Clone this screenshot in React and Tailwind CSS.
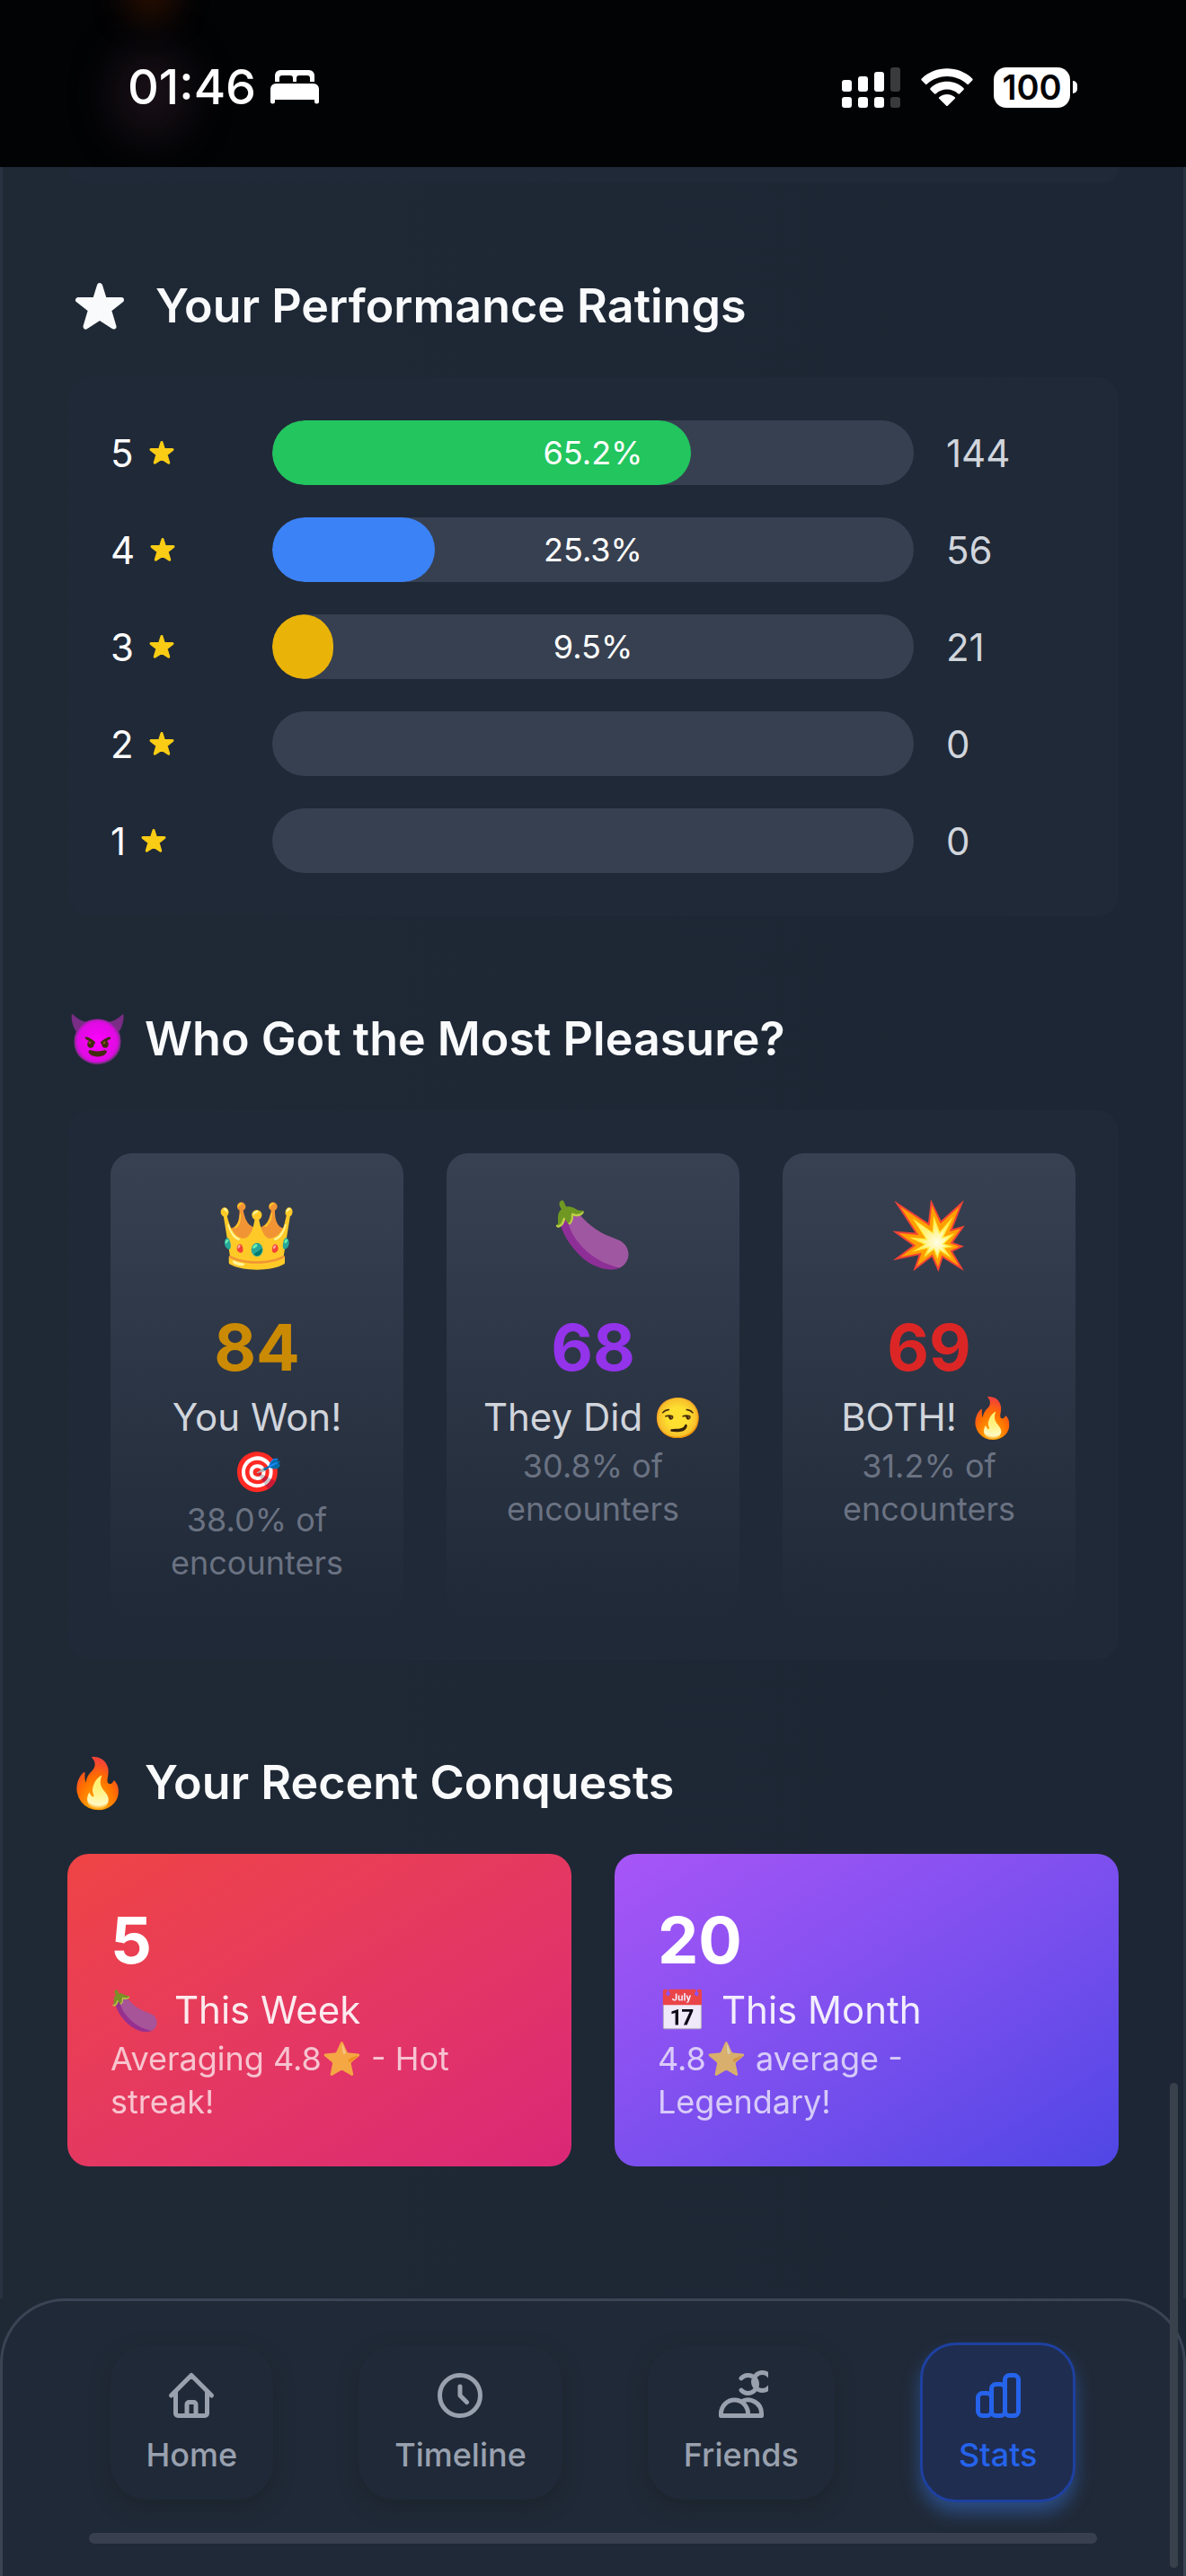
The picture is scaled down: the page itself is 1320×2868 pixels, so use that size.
const ratings = [
  { stars: 5, count: 144, percent: 65.2, color: "bg-[#22c55e]" },
  { stars: 4, count: 56, percent: 25.3, color: "bg-[#3b82f6]" },
  { stars: 3, count: 21, percent: 9.5, color: "bg-[#eab308]" },
  { stars: 2, count: 0, percent: 0, color: "bg-gray-500" },
  { stars: 1, count: 0, percent: 0, color: "bg-gray-500" },
];

const outcomes = [
  { icon: "👑", value: 84, label: "You Won!", emoji: "🎯", stacked: true, share: "38.0%", color: "text-[#ca8a04]" },
  { icon: "🍆", value: 68, label: "They Did", emoji: "😏", share: "30.8%", color: "text-[#9333ea]" },
  { icon: "💥", value: 69, label: "BOTH!", emoji: "🔥", share: "31.2%", color: "text-[#dc2626]" },
];

const tabs = [
  {
    name: "Home",
    path: "M3 12l2-2m0 0l7-7 7 7M5 10v10a1 1 0 001 1h3m10-11l2 2m-2-2v10a1 1 0 01-1 1h-3m-6 0a1 1 0 001-1v-4a1 1 0 011-1h2a1 1 0 011 1v4a1 1 0 001 1m-6 0h6",
  },
  { name: "Timeline", path: "M12 8v4l3 3m6-3a9 9 0 11-18 0 9 9 0 0118 0z" },
  {
    name: "Friends",
    path: "M12 4.354a4 4 0 110 5.292M15 21H3v-1a6 6 0 0112 0v1zm0 0h6v-1a6 6 0 00-9-5.197M25.4 5.8a4 4 0 11-8 0 4 4 0 018 0z",
  },
  {
    name: "Stats",
    active: true,
    path: "M9 19v-6a2 2 0 00-2-2H5a2 2 0 00-2 2v6a2 2 0 002 2h2a2 2 0 002-2zm0 0V9a2 2 0 012-2h2a2 2 0 012 2v10m-6 0a2 2 0 002 2h2a2 2 0 002-2m0 0V5a2 2 0 012-2h2a2 2 0 012 2v14a2 2 0 01-2 2h-2a2 2 0 01-2-2z",
  },
];

function Star({ className }) {
  return (
    <svg
      className={className}
      viewBox="0 0 60 60"
      fill="currentColor"
      stroke="currentColor"
      strokeWidth="6"
      strokeLinejoin="round"
      aria-hidden="true"
    >
      <path d="M30 7L35 23H54L40 34L45.500 52.500L30 42.500L14.500 52.500L20 34L6 23H25Z" />
    </svg>
  );
}

function StatusBar() {
  return (
    <header className="relative flex h-[186px] items-center justify-between overflow-hidden bg-[#020305] pt-2 pr-[121px] pl-[142px] text-white">
      <div className="absolute top-14 left-32 h-24 w-20 rounded-full bg-[#2a1a24]/60 blur-xl" />
      <div className="absolute -top-8 left-34 h-14 w-16 rounded-full bg-[#3a1400]/60 blur-lg" />
      <div className="relative flex items-center gap-4">
        <span className="text-[54px] leading-none font-medium">01:46</span>
        <svg width="54" height="38" viewBox="0 0 54 38" fill="currentColor" aria-label="Sleep mode">
          <path d="M5 13V6a6 6 0 016-6h32a6 6 0 016 6v7h-5V9a3 3 0 00-3-3H32a3 3 0 00-3 3v4h-4V9a3 3 0 00-3-3H13a3 3 0 00-3 3v4z" />
          <path d="M0 21a6 6 0 016-6h42a6 6 0 016 6v14a2.500 2.500 0 01-5 0v-2H5v2a2.500 2.500 0 01-5 0z" />
        </svg>
      </div>
      <div className="relative flex items-center gap-[23px]">
        <svg width="65" height="45" viewBox="0 0 65 45" fill="currentColor" aria-label="Signal">
          <rect x="0" y="14" width="11" height="13" rx="3" />
          <rect x="18" y="10" width="11" height="17" rx="3" />
          <rect x="36" y="5" width="11" height="22" rx="3" />
          <rect x="54" y="0" width="11" height="27" rx="3" opacity="0.22" />
          <rect x="0" y="33" width="11" height="12" rx="3" />
          <rect x="18" y="33" width="11" height="12" rx="3" />
          <rect x="36" y="33" width="11" height="12" rx="3" />
          <rect x="54" y="33" width="11" height="12" rx="3" opacity="0.22" />
        </svg>
        <svg width="58" height="42" viewBox="0 0 58 42" fill="currentColor" aria-label="Wi-Fi">
          <path d="M0.800 11.500C16-3.500 42-3.500 57.200 11.500q1 1 0 2l-4 4q-1 1-2 0C38.500 6 19.500 6 6.800 17.500q-1 1-2 0l-4-4q-1-1 0-2z" />
          <path d="M10.600 22C21 12.300 37 12.300 47.400 22q1 1 0 2l-4.200 4.200q-1 .9-2 0c-7-6.200-17.400-6.200-24.400 0q-1 .9-2 0L10.600 24q-1-1 0-2z" />
          <path d="M20.500 32c5-4 12-4 17 0q1.200 1 .1 2.100l-7.600 7.400q-1 1-2 0l-7.600-7.400q-1.100-1.100.1-2.100z" />
        </svg>
        <div className="flex items-center gap-[3px]">
          <span className="flex h-[45px] w-[85px] items-center justify-center rounded-[14px] bg-white text-[38px] leading-none font-semibold text-[#020305]">
            100
          </span>
          <span className="h-[14px] w-[5px] rounded-r-full bg-white" />
        </div>
      </div>
    </header>
  );
}

function Heading({ icon, children }) {
  return (
    <h2 className="mb-10 flex items-center gap-4 text-[52px] leading-[78px] font-semibold text-gray-50">
      <span className="w-[70px] text-[54px]">{icon}</span>
      <span>{children}</span>
    </h2>
  );
}

function RatingRow({ stars, count, percent, color }) {
  return (
    <div className="flex items-center gap-9">
      <div className="flex w-36 items-center gap-4 text-[42px] text-white">
        {stars}
        <Star className="size-[30px] text-[#facc15]" />
      </div>
      <div className="relative h-[72px] flex-1 overflow-hidden rounded-full bg-[#374050]">
        {percent > 0 && (
          <>
            <div className={`h-full rounded-full ${color}`} style={{ width: `${percent}%` }} />
            <span className="absolute inset-0 flex items-center justify-center text-[36px] text-white">
              {percent}%
            </span>
          </>
        )}
      </div>
      <div className="w-36 text-[42px] text-gray-300">{count}</div>
    </div>
  );
}

function OutcomeCard({ icon, value, label, emoji, stacked, share, color }) {
  return (
    <div className="flex-1 rounded-3xl bg-linear-to-b from-[#384152] to-[#384152]/0 py-9 text-center">
      <div className="h-[108px] text-[72px] leading-[108px]">{icon}</div>
      <div className={`mt-6 text-[72px] leading-[96px] font-bold ${color}`}>{value}</div>
      <div
        className={
          stacked
            ? "flex flex-col items-center text-[42px] leading-[60px] text-gray-300"
            : "flex items-center justify-center gap-3 text-[42px] leading-[60px] text-gray-300"
        }
      >
        <span>{label}</span>
        <span className="h-[60px] text-[44px]">{emoji}</span>
      </div>
      <div className="text-[36px] leading-[48px] text-gray-500">
        {share} of
        <br />
        encounters
      </div>
    </div>
  );
}

function ConquestCard({ value, emoji, label, gradient, children }) {
  return (
    <div className={`flex-1 rounded-3xl bg-linear-to-br p-12 text-white ${gradient}`}>
      <div className="text-[72px] leading-[96px] font-bold">{value}</div>
      <div className="flex h-[60px] items-center gap-4 text-[42px] leading-[60px] opacity-90">
        <span className="text-[44px]">{emoji}</span>
        <span>{label}</span>
      </div>
      <p className="text-[36px] leading-[48px] opacity-70">{children}</p>
    </div>
  );
}

function TabBar() {
  return (
    <nav className="relative mt-auto rounded-t-[72px] border-x-[3px] border-t-[3px] border-[#3a4454] bg-[#202937] px-[72px] pt-[46px] pb-9">
      <div className="flex items-center justify-around">
        {tabs.map((tab) => (
          <button
            key={tab.name}
            type="button"
            className={
              tab.active
                ? "flex flex-col items-center gap-3 rounded-[40px] border-[3px] border-[#1e40a0] bg-[#1f2d50] px-10 py-[26px] text-[#2563eb] shadow-[0_12px_20px_rgba(59,130,246,0.4)]"
                : "flex flex-col items-center gap-3 rounded-[40px] bg-[#202937] px-10 py-[26px] text-gray-400 shadow-[0_8px_20px_rgba(25,35,40,0.7)]"
            }
          >
            <svg
              className="size-[60px]"
              viewBox="0 0 24 24"
              fill="none"
              stroke="currentColor"
              strokeWidth="2"
              strokeLinecap="round"
              strokeLinejoin="round"
              aria-hidden="true"
            >
              <path d={tab.path} />
            </svg>
            <span className="text-[36px] leading-[48px] font-medium">{tab.name}</span>
          </button>
        ))}
      </div>
      <div className="mx-6 mt-[34px] h-3 rounded-md bg-[#384050]" />
    </nav>
  );
}

export default function App() {
  return (
    <div className="relative flex min-h-screen flex-col bg-linear-to-r from-[#1f2936] to-[#1d2634] font-[Inter,sans-serif]">
      <StatusBar />
      <div className="flex flex-1 flex-col">
        <main className="flex flex-col gap-[98px] border-x-[3px] border-[#283241] px-[72px] pb-[147px]">
          <div className="h-[18px] rounded-b-3xl bg-[#202937]" />
          <section>
            <h2 className="mb-10 flex items-center gap-8 pl-[6px] text-[52px] leading-[78px] font-semibold text-gray-50">
              <Star className="size-[60px]" />
              Your Performance Ratings
            </h2>
            <div className="flex flex-col gap-9 rounded-3xl bg-[#202937] p-12">
              {ratings.map((row) => (
                <RatingRow key={row.stars} {...row} />
              ))}
            </div>
          </section>
          <section>
            <Heading icon="😈">Who Got the Most Pleasure?</Heading>
            <div className="flex gap-12 rounded-3xl bg-[#202937] p-12">
              {outcomes.map((item) => (
                <OutcomeCard key={item.label} {...item} />
              ))}
            </div>
          </section>
          <section>
            <Heading icon="🔥">Your Recent Conquests</Heading>
            <div className="flex gap-12">
              <ConquestCard value={5} emoji="🍆" label="This Week" gradient="from-[#ef4444] to-[#db2777]">
                Averaging 4.8⭐ - Hot streak!
              </ConquestCard>
              <ConquestCard value={20} emoji="📅" label="This Month" gradient="from-[#a855f7] to-[#4f46e5]">
                4.8⭐ average - Legendary!
              </ConquestCard>
            </div>
          </section>
        </main>
        <TabBar />
      </div>
      <div className="absolute right-[9px] bottom-[9px] h-[540px] w-[9px] rounded-full bg-[#39424c]" />
    </div>
  );
}
